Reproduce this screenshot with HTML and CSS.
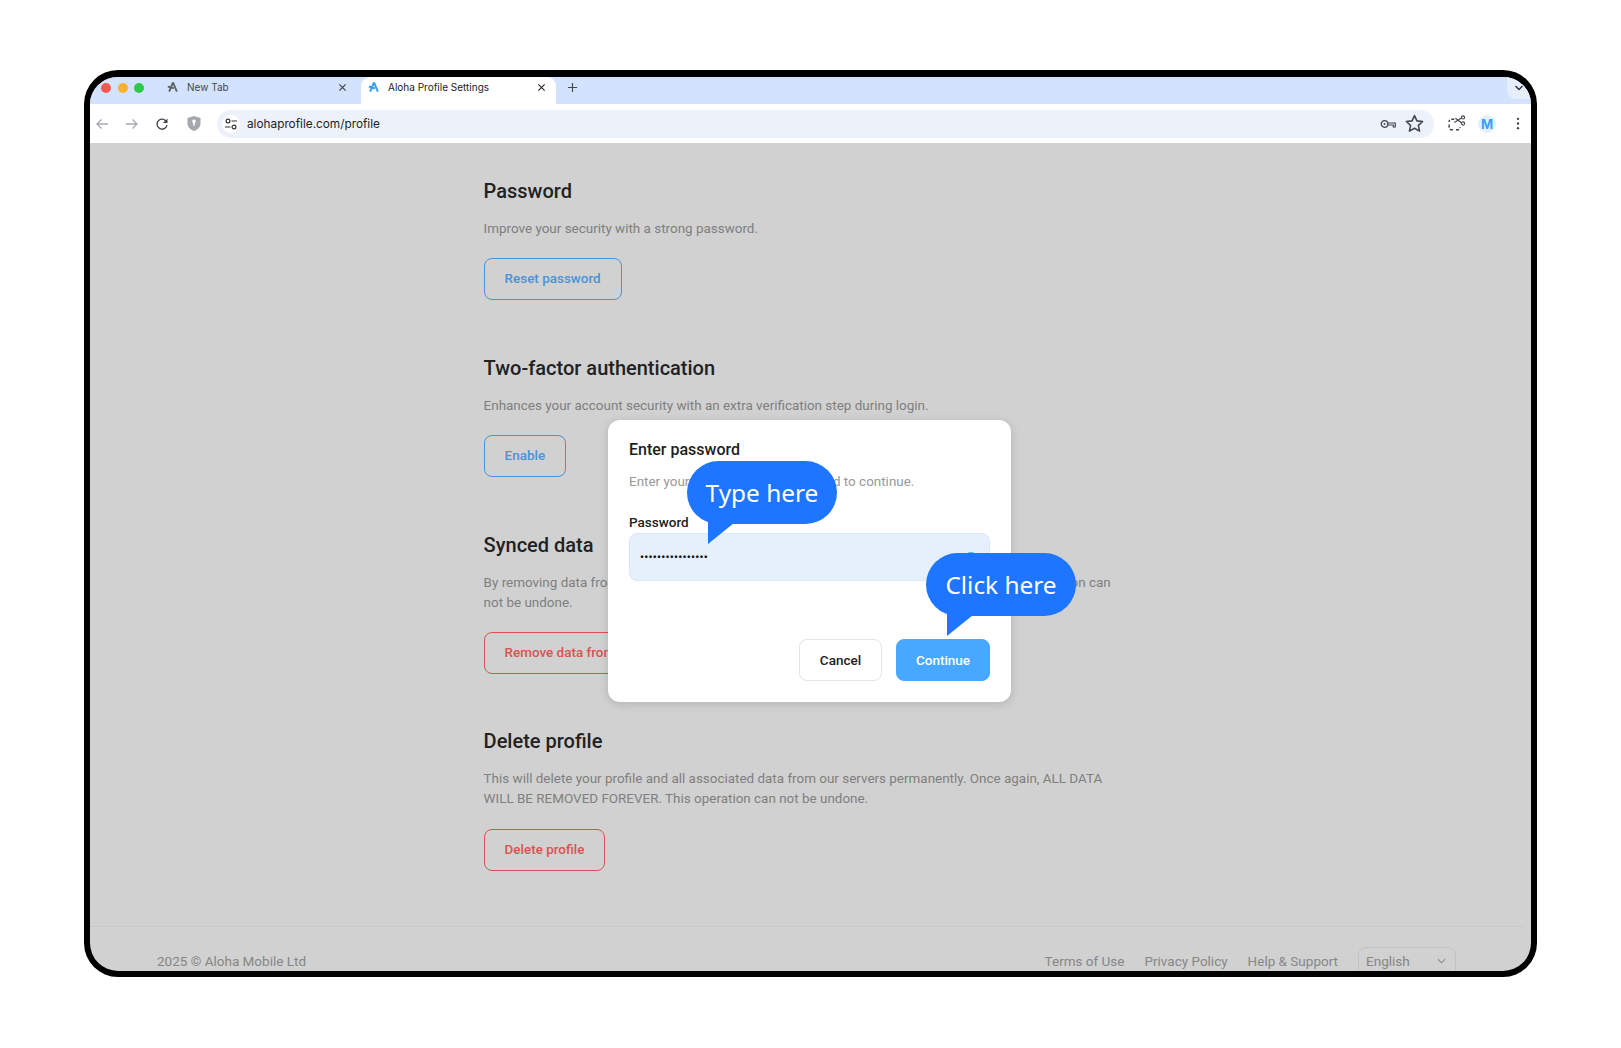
FILE: index.html
```html
<!DOCTYPE html>
<html>
  <head>
    <meta charset="utf-8">
    <title>Aloha Profile Settings</title>
    <link rel="stylesheet" href="styles.css">
  </head>
  <body>
    <div class="frame">
      <div class="tabstrip">
        <div class="lights">
          <span class="light red"></span>
          <span class="light yellow"></span>
          <span class="light green"></span>
        </div>
        <div class="tab">
          <svg class="tab-icon" viewBox="0 0 14 14"><path d="M7 1.500 2.500 12.500M7 1.500l4.500 11M1 6.500l7 2.200" fill="none" stroke="#5f6368" stroke-width="2.200"/></svg>
          <span class="tab-title">New Tab</span>
          <svg class="tab-close" viewBox="0 0 10 10"><path d="M1.500 1.500l7 7M8.500 1.500l-7 7" stroke="#45494e" stroke-width="1.400"/></svg>
        </div>
        <div class="tab active">
          <svg class="tab-icon" viewBox="0 0 14 14"><path d="M7 1.500 2.500 12.500M7 1.500l4.500 11M1 6.500l7 2.200" fill="none" stroke="#3aa0f5" stroke-width="2.400"/></svg>
          <span class="tab-title">Aloha Profile Settings</span>
          <svg class="tab-close" viewBox="0 0 10 10"><path d="M1.500 1.500l7 7M8.500 1.500l-7 7" stroke="#333" stroke-width="1.400"/></svg>
        </div>
        <svg class="new-tab" viewBox="0 0 12 12"><path d="M6 1v10M1 6h10" stroke="#45494e" stroke-width="1.300"/></svg>
        <div class="tab-menu">
          <svg viewBox="0 0 10 6" width="10" height="6"><path d="M1.500 1 5 4.500 8.500 1" fill="none" stroke="#333" stroke-width="1.400"/></svg>
        </div>
      </div>

      <div class="toolbar">
        <svg class="tool first" viewBox="0 0 14 14"><path d="M13 7H2M6.500 2.500 2 7l4.500 4.500" fill="none" stroke="#a6a9ad" stroke-width="1.300"/></svg>
        <svg class="tool" viewBox="0 0 14 14"><path d="M1 7h11M7.500 2.500 12 7l-4.500 4.500" fill="none" stroke="#a6a9ad" stroke-width="1.300"/></svg>
        <svg class="tool" viewBox="0 0 14 14"><path d="M11.800 5.500A5 5 0 1 0 12 8" fill="none" stroke="#45494e" stroke-width="1.400"/><path d="M12.500 1.500v4.500H8z" fill="#45494e"/></svg>
        <svg class="shield" viewBox="0 0 14 16"><path d="M7 .5 13.500 2.500V8c0 3.500-2.800 6-6.500 7.500C3.300 14 .5 11.500.5 8V2.500z" fill="#a4a7ab"/><path d="M7 4a1.800 1.800 0 0 1 1 3.300L7.500 10.500h-1L6 7.300A1.800 1.800 0 0 1 7 4z" fill="#fff"/></svg>
        <div class="address">
          <span class="site-info">
            <svg viewBox="0 0 14 14" width="14" height="14"><circle cx="4" cy="4" r="1.900" fill="none" stroke="#333" stroke-width="1.200"/><path d="M7.500 4H13M1 10h5.500" stroke="#333" stroke-width="1.200"/><circle cx="10" cy="10" r="1.900" fill="none" stroke="#333" stroke-width="1.200"/></svg>
          </span>
          <span class="url">alohaprofile.com/profile</span>
          <svg class="key" viewBox="0 0 16 10"><circle cx="4.500" cy="5" r="3.300" fill="none" stroke="#45494e" stroke-width="1.300"/><circle cx="4.500" cy="5" r="1" fill="#45494e"/><path d="M8 4h7.300v4h-2V6H8" fill="none" stroke="#45494e" stroke-width="1.200"/></svg>
          <svg class="star" viewBox="0 0 18 18"><path d="M9 1.500l2.300 5 5.400.6-4 3.700 1.100 5.400L9 13.500l-4.800 2.700 1.100-5.400-4-3.700 5.400-.6z" fill="none" stroke="#45494e" stroke-width="1.500" stroke-linejoin="round"/></svg>
        </div>
        <svg class="scissors" viewBox="0 0 18 16"><path d="M7 4H4.500A2.500 2.500 0 0 0 2 6.500M2 9v2.500A2.500 2.500 0 0 0 4.500 14H6M8.500 14h1.500A2.500 2.500 0 0 0 12.500 11.500" fill="none" stroke="#45494e" stroke-width="1.400" stroke-dasharray="3 1.500"/><path d="M7 7 14 2.500M8 3l6 4.500" stroke="#45494e" stroke-width="1.100"/><circle cx="15.200" cy="2.200" r="1.500" fill="none" stroke="#45494e" stroke-width="1.100"/><circle cx="15.200" cy="8" r="1.500" fill="none" stroke="#45494e" stroke-width="1.100"/></svg>
        <span class="avatar">M</span>
        <svg class="more" viewBox="0 0 4 14"><circle cx="2" cy="2" r="1.300" fill="#45494e"/><circle cx="2" cy="7" r="1.300" fill="#45494e"/><circle cx="2" cy="12" r="1.300" fill="#45494e"/></svg>
      </div>

      <div class="page">
        <main class="contained">
          <section class="block">
            <h2>Password</h2>
            <p>Improve your security with a strong password.</p>
            <a class="btn">Reset password</a>
          </section>
          <section class="block">
            <h2>Two-factor authentication</h2>
            <p>Enhances your account security with an extra verification step during login.</p>
            <a class="btn">Enable</a>
          </section>
          <section class="block">
            <h2>Synced data</h2>
            <p>By removing data from the cloud, your synced data will be erased from all of your devices. This action can not be undone.</p>
            <a class="btn danger">Remove data from cloud</a>
          </section>
          <section class="block">
            <h2>Delete profile</h2>
            <p>This will delete your profile and all associated data from our servers permanently. Once again, ALL DATA WILL BE REMOVED FOREVER. This operation can not be undone.</p>
            <a class="btn danger">Delete profile</a>
          </section>
        </main>
        <footer>
          <span>2025 © Aloha Mobile Ltd</span>
          <nav class="links">
            <a>Terms of Use</a>
            <a>Privacy Policy</a>
            <a>Help &amp; Support</a>
            <div class="lang">
              English
              <svg viewBox="0 0 10 6" width="9" height="6"><path d="M1 1l4 4 4-4" fill="none" stroke="#8a8a8a" stroke-width="1.200"/></svg>
            </div>
          </nav>
        </footer>
      </div>

      <div class="dialog">
        <h3>Enter password</h3>
        <p class="dialog-text">Enter your Aloha account password to continue.</p>
        <label>Password</label>
        <div class="input">
          <span class="dots">••••••••••••••••</span>
          <span class="eye"></span>
        </div>
        <div class="actions">
          <a class="action cancel">Cancel</a>
          <a class="action continue">Continue</a>
        </div>
      </div>

      <div class="bubble type-here">Type here</div>
      <div class="bubble click-here">Click here</div>
    </div>
  </body>
</html>
```

FILE: styles.css
```css
* {
  box-sizing: border-box;
}

body {
  margin: 0;
  padding: 70px 0 0 84px;
  height: 1048px;
  background: #fff;
  font-family: Roboto, sans-serif;
  overflow: hidden;
}

.frame {
  position: relative;
  width: 1453px;
  height: 907px;
  border: 6px solid #000;
  border-top-width: 7px;
  border-radius: 34px;
  overflow: hidden;
  background: #d1d1d1;
}

/* browser chrome */

.tabstrip {
  display: flex;
  align-items: flex-start;
  height: 27px;
  background: #d3e3fd;
  font-family: Inter, sans-serif;
  font-size: 10px;
}

.lights {
  display: flex;
  gap: 6.500px;
  width: 71px;
  padding: 5.500px 0 0 11px;
}

.light {
  width: 10px;
  height: 10px;
  border-radius: 50%;
}

.red { background: #f5574e; }
.yellow { background: #f7b12c; }
.green { background: #2fc94a; }

.tab {
  display: flex;
  align-items: center;
  width: 190px;
  height: 20px;
  padding-left: 6px;
  color: #45494e;
}

.tab.active {
  width: 195px;
  height: 27px;
  margin-left: 10px;
  padding: 0 10px 7px 7px;
  background: #fff;
  border-radius: 9px 9px 0 0;
  color: #222;
}

.tab-icon {
  width: 12px;
  height: 12px;
  margin-right: 8px;
}

.tab-title {
  flex: 1;
  white-space: nowrap;
}

.tab-close {
  width: 9px;
  height: 9px;
  margin-right: 4px;
}

.tab.active .tab-close {
  margin-right: 0;
}

.new-tab {
  width: 11px;
  height: 11px;
  margin: 5px 0 0 11px;
}

.tab-menu {
  display: flex;
  align-items: center;
  justify-content: center;
  width: 24px;
  height: 22px;
  margin-left: auto;
  background: #e6eefb;
  border-radius: 0 0 0 9px;
}

.toolbar {
  display: flex;
  align-items: center;
  height: 39px;
  background: #fff;
}

.tool {
  width: 14px;
  height: 14px;
  margin-right: 16px;
}

.tool.first {
  margin-left: 5px;
}

.shield {
  width: 14px;
  height: 17px;
  margin: 0 16px 0 2px;
}

.address {
  display: flex;
  align-items: center;
  width: 1217px;
  height: 28px;
  padding: 0 10px 0 5px;
  background: #edf2fa;
  border-radius: 14px;
}

.site-info {
  display: flex;
  align-items: center;
  justify-content: center;
  width: 18px;
  height: 18px;
  margin-right: 7px;
  border-radius: 50%;
  background: #fff;
}

.url {
  flex: 1;
  font-family: Inter, sans-serif;
  font-size: 11.800px;
  color: #222;
}

.key {
  width: 16px;
  height: 10px;
  margin-right: 9px;
}

.star {
  width: 19px;
  height: 19px;
}

.scissors {
  width: 19px;
  height: 17px;
  margin-left: 13px;
}

.avatar {
  display: flex;
  align-items: center;
  justify-content: center;
  width: 18px;
  height: 18px;
  margin-left: 12px;
  border-radius: 50%;
  background: #e3f0fe;
  color: #3aa0f5;
  font-family: Inter, sans-serif;
  font-size: 13px;
  font-weight: 700;
}

.more {
  width: 4px;
  height: 13px;
  margin-left: 20px;
}

/* page behind the dialog */

.contained {
  width: 640px;
  margin-left: 393.600px;
  padding: 34px 0 2px;
}

.block {
  margin-bottom: 53.400px;
}

h2 {
  margin: 0;
  font-size: 20px;
  line-height: 28px;
  font-weight: 500;
  color: #222;
}

.block p {
  margin: 14px 0 19.400px;
  font-size: 13.450px;
  line-height: 20px;
  color: #7f7f7f;
}

.btn {
  display: inline-block;
  height: 42px;
  padding: 0 20px;
  border: 1px solid #4a93d8;
  border-radius: 8px;
  font-size: 13.450px;
  font-weight: 500;
  line-height: 40px;
  color: #4a93d8;
}

.btn.danger {
  border-color: #d9534f;
  color: #d9534f;
}

footer {
  display: flex;
  justify-content: space-between;
  height: 60px;
  margin-right: 8px;
  padding: 19.500px 67px 0 67px;
  border-top: 1px solid #c8c8c8;
  font-size: 13.500px;
  line-height: 28px;
  color: #868686;
}

.links {
  display: flex;
  gap: 20px;
}

.lang {
  display: flex;
  align-items: center;
  justify-content: space-between;
  width: 98px;
  height: 32px;
  padding: 0 9px 4px 7px;
  border: 1px solid #c2c2c2;
  border-radius: 8px;
}

/* dialog */

.dialog {
  position: absolute;
  left: 518px;
  top: 343px;
  display: flex;
  flex-direction: column;
  width: 403px;
  height: 282px;
  padding: 19px 21px 21px;
  background: #fff;
  border-radius: 12px;
  box-shadow: 0 2px 10px rgba(0,0,0,.15);
}

.dialog h3 {
  margin: 0;
  font-size: 16px;
  line-height: 22px;
  font-weight: 500;
  color: #1d1d1d;
}

.dialog-text {
  margin: 10.500px 0 0;
  font-size: 13.450px;
  line-height: 20px;
  color: #999;
  white-space: nowrap;
}

.dialog label {
  margin-top: 20px;
  font-size: 13.500px;
  line-height: 20px;
  font-weight: 500;
  color: #222;
}

.input {
  display: flex;
  align-items: center;
  justify-content: space-between;
  height: 48px;
  margin-top: 1.500px;
  padding: 0 10px;
  background: #e6effc;
  border: 1px solid #dce6f5;
  border-radius: 8px;
}

.dots {
  font-size: 11px;
  font-weight: 700;
  letter-spacing: .3px;
  color: #111;
}

.eye {
  width: 16px;
  height: 16px;
  border: 1px solid #48a7ff;
  border-radius: 50%;
  margin-top: 6px;
}

.actions {
  display: flex;
  justify-content: flex-end;
  gap: 14px;
  margin-top: auto;
}

.action {
  height: 42px;
  border-radius: 8px;
  font-size: 13.500px;
  font-weight: 500;
  line-height: 40px;
  text-align: center;
}

.cancel {
  width: 83px;
  border: 1px solid #e5e5e5;
  color: #222;
}

.continue {
  width: 94px;
  border: 1px solid #48a7ff;
  background: #48a7ff;
  color: #fff;
}

/* callouts */

.bubble {
  position: absolute;
  width: 150px;
  height: 63px;
  border-radius: 32px;
  background: #1e75ff;
  color: #fff;
  font-family: "Noto Sans", sans-serif;
  font-size: 24.400px;
  line-height: 63px;
  text-align: center;
}

.bubble:after {
  content: '';
  position: absolute;
  left: 21px;
  top: 55px;
  width: 26px;
  height: 28px;
  background: #1e75ff;
  clip-path: polygon(0 0, 100% 0, 100% 25%, 0 100%);
}

.type-here {
  left: 597px;
  top: 384px;
}

.click-here {
  left: 836px;
  top: 476px;
}
```
